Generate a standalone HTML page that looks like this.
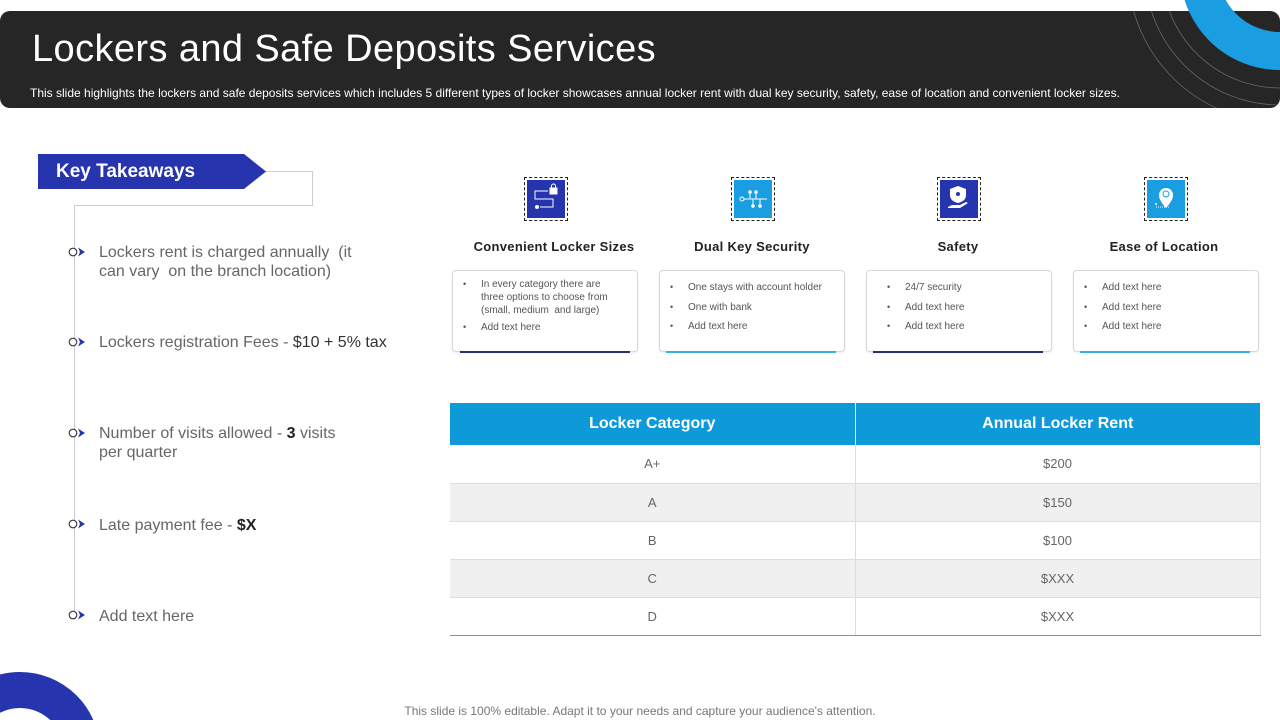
<!DOCTYPE html>
<html><head><meta charset="utf-8"><style>
*{margin:0;padding:0;box-sizing:border-box}
body{width:1280px;height:720px;position:relative;overflow:hidden;background:#fff;font-family:"Liberation Sans",sans-serif}
.abs{position:absolute}
.hdr{left:0;top:11px;width:1280px;height:97px;background:#262626;border-radius:10px;overflow:hidden}
.title{left:32px;top:28px;font-size:38px;color:#fff;letter-spacing:0.4px}
.sub{left:30px;top:86px;font-size:12px;color:#fff;letter-spacing:0px}
.kt{left:38px;top:154px;width:228px;height:35px;background:#2634ad;clip-path:polygon(0 0,206px 0,100% 50%,206px 100%,0 100%)}
.kt span{position:absolute;left:18px;top:7px;color:#fff;font-weight:bold;font-size:19px}
.item{left:99px;font-size:16px;color:#666;line-height:19px}
.item b{color:#222}
.bul{left:68px;width:22px;height:10px}
.icon{width:44px;height:44px;top:177px;border:1.5px dashed #222;padding:2px}
.icon div{width:100%;height:100%}
.ct{top:239px;width:200px;text-align:center;font-weight:bold;font-size:13px;color:#222;letter-spacing:.3px}
.card{top:270px;width:186px;height:82px;border:1px solid #d8d8d8;border-radius:4px;background:#fff;box-shadow:0 1px 2px rgba(0,0,0,.08)}
.card ul{list-style:none;padding:10px 8px 0 28px;font-size:10px;color:#555;line-height:13px}
.card li{position:relative;margin-bottom:6.5px}
.card li:before{content:"•";position:absolute;left:-18px;font-size:9px}
.card.t li{margin-bottom:4px}
.ln{height:2px;top:351px;width:170px}
table{position:absolute;left:450px;top:403px;width:810px;border-collapse:collapse;table-layout:fixed}
th{background:#0e9ad9;color:#fff;font-size:16px;height:42px;font-weight:bold;border-right:1px solid #fff}
td{height:38px;text-align:center;font-size:13px;color:#666;border-bottom:1px solid #ddd;border-right:1px solid #ddd}
tr.g td{background:#f0f0f0}
tr.l td{border-bottom:1px solid #3aa9dd !important}
</style></head><body>
<div class="abs hdr">
<svg class="abs" style="left:0;top:-11px" width="1280" height="120">
<g fill="none" stroke="#666" stroke-width="0.8">
<circle cx="1280" cy="-30" r="118"/><circle cx="1280" cy="-30" r="135"/><circle cx="1280" cy="-30" r="152"/></g>
<circle cx="1280" cy="-30" r="81" fill="none" stroke="#1b9de2" stroke-width="38"/>
</svg>
</div>
<svg class="abs" style="left:0;top:0" width="1280" height="12"><circle cx="1280" cy="-30" r="81" fill="none" stroke="#1b9de2" stroke-width="38"/></svg>
<div class="abs title">Lockers and Safe Deposits Services</div>
<div class="abs sub">This slide highlights the lockers and safe deposits services which includes 5 different types of locker showcases annual locker rent with dual key security, safety, ease of location and convenient locker sizes.</div>

<svg class="abs" style="left:0;top:0" width="420" height="720">
<path d="M250 171.5H312.5V205.5H74.5V612" fill="none" stroke="#ccc" stroke-width="1"/>
<circle cx="20" cy="752" r="62" fill="none" stroke="#2634ad" stroke-width="36"/>
</svg>
<div class="abs kt"><span>Key Takeaways</span></div>

<svg class="abs" width="0" height="0"><defs><g id="b"><circle cx="5" cy="5" r="3.8" fill="#fff" stroke="#333" stroke-width="1.1"/><path d="M10 0.5L17 5L10 9.5L12 5Z" fill="#2634ad"/></g></defs></svg>
<svg class="abs bul" style="top:247px"><use href="#b"/></svg>
<svg class="abs bul" style="top:337px"><use href="#b"/></svg>
<svg class="abs bul" style="top:428px"><use href="#b"/></svg>
<svg class="abs bul" style="top:519px"><use href="#b"/></svg>
<svg class="abs bul" style="top:610px"><use href="#b"/></svg>
<div class="abs item" style="top:243px">Lockers rent is charged annually &nbsp;(it<br>can vary &nbsp;on the branch location)</div>
<div class="abs item" style="top:333px">Lockers registration Fees - <span style="color:#333">$10 + 5% tax</span></div>
<div class="abs item" style="top:424px">Number of visits allowed - <b>3</b> visits<br>per quarter</div>
<div class="abs item" style="top:516px">Late payment fee - <b>$X</b></div>
<div class="abs item" style="top:607px">Add text here</div>

<div class="abs icon" style="left:524px"><div style="background:#2634ad"><svg width="37" height="37" viewBox="0 0 37 37" fill="none" stroke="#fff" stroke-width="1"><path d="M21 11H8V19H26V27H13"/><rect x="23" y="8" width="7" height="6" fill="#fff"/><path d="M24.5 8V6a2 2 0 0 1 4 0v2"/><circle cx="10" cy="27" r="1.5" fill="#fff"/></svg></div></div>
<div class="abs icon" style="left:731px"><div style="background:#1b9de2"><svg width="37" height="37" viewBox="0 0 37 37" fill="none" stroke="#fff" stroke-width="1"><path d="M10 19H33M16 19V13M22 19V13M19 19V25M26 19V25"/><circle cx="8" cy="19" r="2"/><circle cx="16" cy="12" r="1.3" fill="#fff"/><circle cx="22" cy="12" r="1.3" fill="#fff"/><circle cx="19" cy="26" r="1.3" fill="#fff"/><circle cx="26" cy="26" r="1.3" fill="#fff"/></svg></div></div>
<div class="abs icon" style="left:937px"><div style="background:#2634ad"><svg width="37" height="37" viewBox="0 0 37 37"><path d="M18 6l8 3v6c0 5-4 7-8 8-4-1-8-3-8-8V9z" fill="#fff"/><circle cx="18" cy="14" r="2" fill="#2634ad"/><path d="M8 27l4-2h8l6-3 2 1-8 5H8z" fill="#fff"/></svg></div></div>
<div class="abs icon" style="left:1144px"><div style="background:#1b9de2"><svg width="37" height="37" viewBox="0 0 37 37"><path d="M19 28C13 21 12 18 12 15a7 7 0 0 1 14 0c0 3-1 6-7 13z" fill="#fff"/><circle cx="19" cy="14" r="3" fill="none" stroke="#1b9de2"/><path d="M9 27h14" stroke="#fff" stroke-dasharray="1 1"/><circle cx="9" cy="24" r="1" fill="#fff"/></svg></div></div>

<div class="abs ct" style="left:454px">Convenient Locker Sizes</div>
<div class="abs ct" style="left:652px">Dual Key Security</div>
<div class="abs ct" style="left:858px">Safety</div>
<div class="abs ct" style="left:1064px">Ease of Location</div>

<div class="abs card t" style="left:452px"><ul style="padding-top:7px;padding-right:22px"><li>In every category there are three options to choose from (small, medium &nbsp;and large)</li><li>Add text here</li></ul></div>
<div class="abs card" style="left:659px"><ul><li>One stays with account holder</li><li>One with bank</li><li>Add text here</li></ul></div>
<div class="abs card" style="left:866px"><ul style="padding-left:38px"><li>24/7 security</li><li>Add text here</li><li>Add text here</li></ul></div>
<div class="abs card" style="left:1073px"><ul><li>Add text here</li><li>Add text here</li><li>Add text here</li></ul></div>
<div class="abs ln" style="left:460px;background:#2b2f6b"></div>
<div class="abs ln" style="left:666px;background:#39b0e0"></div>
<div class="abs ln" style="left:873px;background:#2b2f6b"></div>
<div class="abs ln" style="left:1080px;background:#39b0e0"></div>

<table>
<colgroup><col style="width:405px"><col style="width:405px"></colgroup>
<tr><th>Locker Category</th><th style="border-right:none">Annual Locker Rent</th></tr>
<tr><td>A+</td><td>$200</td></tr>
<tr class="g"><td>A</td><td>$150</td></tr>
<tr><td>B</td><td>$100</td></tr>
<tr class="g"><td>C</td><td>$XXX</td></tr>
<tr class="l"><td>D</td><td>$XXX</td></tr>
</table>

<div class="abs" style="left:0;width:1280px;top:704px;text-align:center;font-size:12px;line-height:14px;color:#777">This slide is 100% editable. Adapt it to your needs and capture your audience's attention.</div>
</body></html>
